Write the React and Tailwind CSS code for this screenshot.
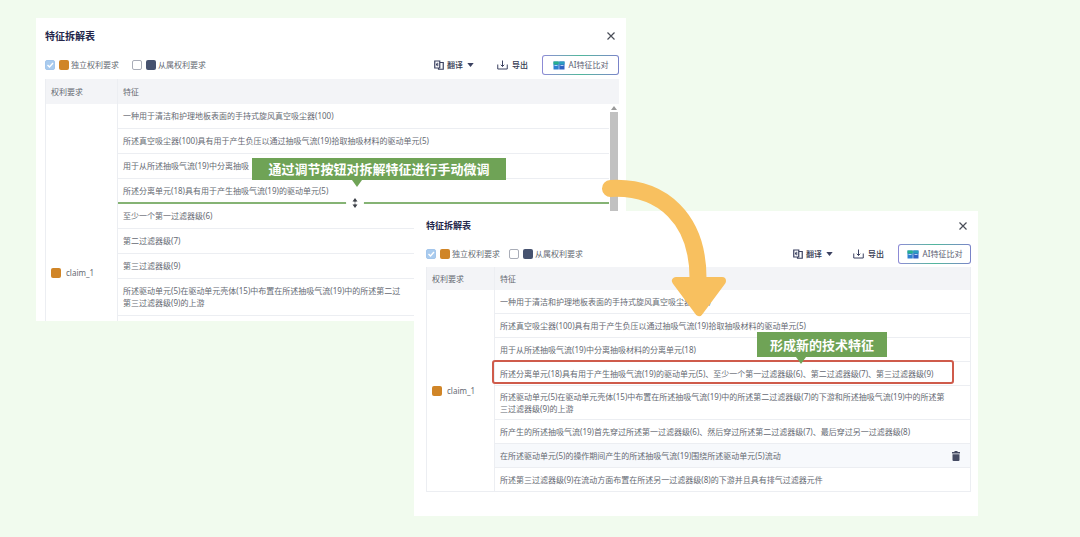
import React from 'react';

const FIRST_ROWS = [
  { text: '一种用于清洁和护理地板表面的手持式旋风真空吸尘器(100)' },
  { text: '所述真空吸尘器(100)具有用于产生负压以通过抽吸气流(19)拾取抽吸材料的驱动单元(5)' },
  { text: '用于从所述抽吸气流(19)中分离抽吸' },
  { text: '所述分离单元(18)具有用于产生抽吸气流(19)的驱动单元(5)', split: true },
  { text: '至少一个第一过滤器级(6)' },
  { text: '第二过滤器级(7)' },
  { text: '第三过滤器级(9)' },
  { text: '所述驱动单元(5)在驱动单元壳体(15)中布置在所述抽吸气流(19)中的所述第二过\n第三过滤器级(9)的上游', tall: true },
  { text: '' },
];

const SECOND_ROWS = [
  { text: '一种用于清洁和护理地板表面的手持式旋风真空吸尘器(100)' },
  { text: '所述真空吸尘器(100)具有用于产生负压以通过抽吸气流(19)拾取抽吸材料的驱动单元(5)' },
  { text: '用于从所述抽吸气流(19)中分离抽吸材料的分离单元(18)' },
  { text: '所述分离单元(18)具有用于产生抽吸气流(19)的驱动单元(5)、至少一个第一过滤器级(6)、第二过滤器级(7)、第三过滤器级(9)', merged: true },
  { text: '所述驱动单元(5)在驱动单元壳体(15)中布置在所述抽吸气流(19)中的所述第二过滤器级(7)的下游和所述抽吸气流(19)中的所述第\n三过滤器级(9)的上游', tall: true },
  { text: '所产生的所述抽吸气流(19)首先穿过所述第一过滤器级(6)、然后穿过所述第二过滤器级(7)、最后穿过另一过滤器级(8)' },
  { text: '在所述驱动单元(5)的操作期间产生的所述抽吸气流(19)围绕所述驱动单元(5)流动', hovered: true },
  { text: '所述第三过滤器级(9)在流动方面布置在所述另一过滤器级(8)的下游并且具有排气过滤器元件' },
];

function TranslateIcon() {
  return (
    <svg viewBox="0 0 20 20" className="size-[10px] shrink-0" fill="none" stroke="#3b4160" strokeWidth="2.400">
      <path d="M1.500 2h10v14h-10z" />
      <path d="M12 5h6.500v13.500H9V16" />
      <path d="M7.500 5.500v7M5 7v4" strokeWidth="2" />
    </svg>
  );
}

function ExportIcon() {
  return (
    <svg viewBox="0 0 22 20" className="h-[10px] w-[11px] shrink-0" fill="none" stroke="#3b4160" strokeWidth="2">
      <path d="M1.500 9v9h19V9" />
      <path d="M11 1v12M7.500 9.500l3.500 3.500 3.500-3.500" />
    </svg>
  );
}

function CompareIcon() {
  return (
    <svg viewBox="0 0 24 18" className="h-[9px] w-[12px] shrink-0">
      <path d="M1 1h10.500v16H1z" fill="#2f7fd0" />
      <path d="M1 1h10.500v6H1z" fill="#27b08d" />
      <path d="M12.500 1H23v16H12.500z" fill="#2f62c4" />
      <path d="M12.500 1H23v6H12.500z" fill="#2a9fc0" />
      <path d="M3 9h6M15 9h6" stroke="#d8efff" strokeWidth="1.600" />
    </svg>
  );
}

function TrashIcon() {
  return (
    <svg viewBox="0 0 16 20" className="h-[10px] w-[8px]" fill="#454b63">
      <path d="M5 0h6v2h5v3H0V2h5z" />
      <path d="M1 6.500h14V18a2 2 0 0 1-2 2H3a2 2 0 0 1-2-2z" />
    </svg>
  );
}

function Legend({ id, label, color, checked }) {
  return (
    <div className="flex items-center">
      <input
        id={id}
        type="checkbox"
        defaultChecked={checked}
        className="size-[10px] appearance-none rounded-xs border border-[#a9adb8] bg-white checked:border-[#a3c6ec] checked:bg-[#a9cbee]"
      />
      {checked && (
        <svg viewBox="0 0 10 10" className="pointer-events-none -ml-[10px] size-[10px]" fill="none" stroke="#fff" strokeWidth="1.400">
          <path d="M2.500 5l2 2 3.500-4" />
        </svg>
      )}
      <label htmlFor={id} className="flex items-center gap-[2px] pl-1">
        <span className={`size-[10px] rounded-xs ${color}`} />
        {label}
      </label>
    </div>
  );
}

function Toolbar({ id, compact }) {
  return (
    <div className="flex items-center justify-between">
      <div className={`flex items-center ${compact ? 'gap-[9px]' : 'gap-[13px]'}`}>
        <Legend id={`${id}-independent`} label="独立权利要求" color="bg-[#d08527]" checked />
        <Legend id={`${id}-dependent`} label="从属权利要求" color="bg-[#46526f]" />
      </div>
      <div className="flex items-center gap-[14px] font-medium text-[#33384f]">
        <button type="button" className={`flex items-center gap-[3px] ${compact ? 'mr-[6px]' : 'mr-[9px]'}`}>
          <TranslateIcon />
          翻译
          <svg viewBox="0 0 8 5" className="ml-px h-[4px] w-[7px]" fill="#3b4160">
            <path d="M0 0h8L4 5z" />
          </svg>
        </button>
        <button type="button" className="flex items-center gap-1">
          <ExportIcon />
          导出
        </button>
        <button
          type="button"
          className={`rounded-[3px] bg-linear-to-r from-[#8d8ad6] via-[#4fb79c] to-[#7a83c9] p-px font-normal text-[#5b6072] ${compact ? 'w-[73px]' : 'w-[77px]'}`}
        >
          <span className="flex h-[18px] items-center justify-center gap-1 rounded-xs bg-white">
            <CompareIcon />
            AI特征比对
          </span>
        </button>
      </div>
    </div>
  );
}

function Tag({ children, className, pointer }) {
  return (
    <div className={`absolute z-10 flex items-center justify-center whitespace-nowrap bg-[#6fa356] text-[13px] font-bold text-white ${className}`}>
      {children}
      <svg viewBox="0 0 10 7" className={`absolute top-full h-[7px] w-[10px] ${pointer}`} fill="#6fa356">
        <path d="M0 0h10L5 7z" />
      </svg>
    </div>
  );
}

function SplitHandle() {
  return (
    <>
      <div className="absolute inset-x-0 -bottom-px h-[2px] bg-[#85b374]" />
      <button
        type="button"
        aria-label="调节"
        className="absolute -bottom-[9px] left-[228px] flex size-[18px] items-center justify-center rounded-full bg-white"
      >
        <svg viewBox="0 0 8 12" className="h-[12px] w-[8px]" fill="#3c4048">
          <path d="M4 1l2.500 3.500h-5zM4 11l2.500-3.500h-5z" />
          <path d="M3.500 4h1v1.500h-1zM3.500 6.500h1V8h-1z" />
        </svg>
      </button>
    </>
  );
}

function FeatureTable({ rows, compact }) {
  const rowHeight = compact ? 'h-[24px]' : 'h-[25px]';
  const tallHeight = compact ? 'h-[34px]' : 'h-[37px]';

  return (
    <table className={`w-full table-fixed border-separate border-spacing-0 border-l border-[#eceef2] text-left ${compact ? 'border-r' : ''}`}>
      <thead>
        <tr className={`bg-[#f3f4f7] ${compact ? 'h-[23px]' : 'h-[25px]'}`}>
          <th className={`border-r border-[#eceef2] pl-[5px] font-normal ${compact ? 'w-[68px]' : 'w-[72px]'}`}>权利要求</th>
          <th className="pl-[5px] font-normal">特征</th>
        </tr>
      </thead>
      <tbody>
        {rows.map((row, i) => (
          <tr key={row.text} className={row.tall ? tallHeight : rowHeight}>
            {i === 0 && (
              <td
                rowSpan={rows.length}
                className={`border-r border-[#eceef2] pl-[5px] ${compact ? 'border-b align-middle' : 'pt-[163px] align-top'}`}
              >
                <div className="flex items-center gap-[5px]">
                  <span className="size-[10px] rounded-xs bg-[#d08527]" />
                  claim_1
                </div>
              </td>
            )}
            <td
              className={`relative whitespace-pre border-b border-[#eceef2] pl-[5px] leading-[12px] ${row.hovered ? 'bg-[#f7f9fc]' : ''}`}
            >
              {row.text}
              {row.split && <SplitHandle />}
              {row.split && (
                <Tag className="left-[134px] -top-[21px] h-[22px] w-[254px]" pointer="left-[100px]">
                  通过调节按钮对拆解特征进行手动微调
                </Tag>
              )}
              {row.merged && <div className="absolute -top-[2px] right-4 -left-[3px] h-[24px] rounded-[3px] border-2 border-[#cf5b4b]" />}
              {row.merged && (
                <Tag className="-top-[30px] right-[83px] h-[25px] w-[130px]" pointer="left-[39px]">
                  形成新的技术特征
                </Tag>
              )}
              {row.hovered && (
                <button type="button" aria-label="删除" className="absolute top-[7px] right-[10px]">
                  <TrashIcon />
                </button>
              )}
            </td>
          </tr>
        ))}
      </tbody>
    </table>
  );
}

function PanelHeader({ compact }) {
  return (
    <div className="flex items-center justify-between pr-1">
      <h2 className={`font-bold text-[#23264a] ${compact ? 'text-[9px]' : 'text-[10px]'}`}>特征拆解表</h2>
      <button type="button" aria-label="关闭">
        <svg viewBox="0 0 8 8" className="size-[8px]" stroke="#4a4e58" strokeWidth="1.200">
          <path d="M0.500 0.500l7 7M7.500 0.500l-7 7" />
        </svg>
      </button>
    </div>
  );
}

function CurvedArrow() {
  return (
    <svg
      viewBox="0 0 126 140"
      className="pointer-events-none absolute -top-[33px] left-[187px] z-20 h-[140px] w-[126px]"
      fill="none"
      stroke="#f8c05f"
      strokeLinecap="round"
      strokeLinejoin="round"
    >
      <path d="M9.500 10.500C62 8 97 42 97 100" strokeWidth="17" />
      <path d="M75 103h46L98 134z" fill="#f8c05f" strokeWidth="8" />
    </svg>
  );
}

function App() {
  return (
    <main className="grid min-h-screen grid-cols-[36fr_378fr_212fr_352fr_102fr] items-start bg-[#f1fbee] pb-5 font-['Noto_Sans','Noto_Sans_CJK_SC',sans-serif] text-[8px] leading-[12px] text-[#666a73]">
      <section className="col-start-2 col-end-4 row-start-1 mt-[18px] h-[303px] min-w-0 overflow-hidden bg-white px-[9px] pr-[7px] pt-3">
        <PanelHeader />
        <div className="mt-[13px]">
          <Toolbar id="before" />
        </div>
        <div className="relative mt-1">
          <FeatureTable rows={FIRST_ROWS} />
          {/* Scrollbar */}
          <div className="absolute top-[25px] right-0 bottom-0 flex w-[10px] flex-col items-center bg-white">
            <svg viewBox="0 0 6 4" className="my-[2px] h-[4px] w-[6px] shrink-0" fill="#9a9a9a">
              <path d="M3 0l3 4H0z" />
            </svg>
            <div className="w-[8px] grow bg-[#c1c1c1]" />
          </div>
        </div>
      </section>

      <section className="relative col-start-3 col-end-5 row-start-1 mt-[211px] min-w-0 bg-white px-3 pr-[7px] pt-[9px] pb-6">
        <PanelHeader compact />
        <div className="mt-3">
          <Toolbar id="after" compact />
        </div>
        <div className="mt-[3px]">
          <FeatureTable rows={SECOND_ROWS} compact />
        </div>
        <CurvedArrow />
      </section>
    </main>
  );
}

export default App;
